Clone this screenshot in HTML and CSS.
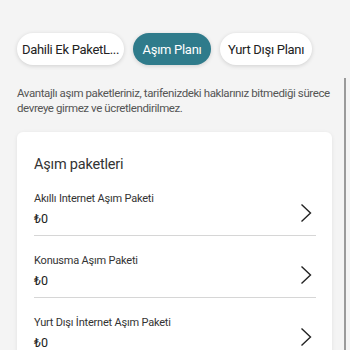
FILE: index.html
```html
<!DOCTYPE html>
<html lang="tr">
<head>
<meta charset="utf-8">
<link rel="stylesheet" href="styles.css">
</head>
<body>
<div class="page">
  <div class="tabs">
    <button class="pill pill-1">Dahili Ek PaketL...</button>
    <button class="pill pill-2 active">Aşım Planı</button>
    <button class="pill pill-3">Yurt Dışı Planı</button>
  </div>
  <p class="desc">Avantajlı aşım paketleriniz, tarifenizdeki haklarınız bitmediği sürece devreye girmez ve ücretlendirilmez.</p>
  <div class="card">
    <h2 class="card-title">Aşım paketleri</h2>
    <div class="item">
      <div class="item-text">
        <div class="item-name">Akıllı Internet Aşım Paketi</div>
        <div class="item-price">₺0</div>
      </div>
      <svg class="chev" width="12" height="20" viewBox="0 0 12 20"><path d="M1.5 1.5 L10.5 10 L1.5 18.5" fill="none" stroke="#222" stroke-width="1.4"/></svg>
    </div>
    <div class="item">
      <div class="item-text">
        <div class="item-name">Konusma Aşım Paketi</div>
        <div class="item-price">₺0</div>
      </div>
      <svg class="chev" width="12" height="20" viewBox="0 0 12 20"><path d="M1.5 1.5 L10.5 10 L1.5 18.5" fill="none" stroke="#222" stroke-width="1.4"/></svg>
    </div>
    <div class="item">
      <div class="item-text">
        <div class="item-name">Yurt Dışı İnternet Aşım Paketi</div>
        <div class="item-price">₺0</div>
      </div>
      <svg class="chev" width="12" height="20" viewBox="0 0 12 20"><path d="M1.5 1.5 L10.5 10 L1.5 18.5" fill="none" stroke="#222" stroke-width="1.4"/></svg>
    </div>
  </div>
  <div class="scrollbar"></div>
</div>
</body>
</html>
```

FILE: styles.css
```css
* { box-sizing: border-box; }
html, body {
  margin: 0;
  padding: 0;
  background: #f4f4f4;
  font-family: Roboto, "Open Sans", sans-serif;
  color: #333;
  overflow: hidden;
}
.page {
  position: relative;
  width: 350px;
  height: 350px;
  padding: 33px 18px 0 17px;
  overflow: hidden;
}
.tabs {
  display: flex;
  gap: 9px;
}
.pill {
  flex: none;
  height: 32px;
  border: none;
  border-radius: 16px;
  background: #fff;
  color: #222;
  font-family: Roboto, sans-serif;
  font-size: 13px;
  letter-spacing: -0.3px;
  padding: 0;
  box-shadow: 0 1px 4px rgba(0,0,0,0.15);
  white-space: nowrap;
}
.pill-1 { width: 107px; }
.pill-2 { width: 78px; }
.pill-3 { width: 92px; }
.pill.active {
  background: #2f7b8b;
  color: #fff;
}
.desc {
  margin: 21px 0 0;
  font-size: 11.5px;
  letter-spacing: -0.4px;
  line-height: 15px;
  color: #555;
  width: 318px;
}
.card {
  margin-top: 16px;
  width: 315px;
  background: #fff;
  border-radius: 6px;
  box-shadow: 0 1px 4px rgba(0,0,0,0.08);
  padding: 23px 16px 0 17px;
}
.card-title {
  margin: 0 0 13px;
  font-size: 14.5px;
  font-weight: normal;
  color: #333;
  line-height: 20px;
  letter-spacing: -0.2px;
}
.item {
  display: flex;
  align-items: center;
  justify-content: space-between;
  border-bottom: 1px solid #d6d6d6;
  height: 48px;
  margin-bottom: 14px;
  padding-right: 4px;
}
.item-text {
  display: flex;
  flex-direction: column;
  gap: 5px;
  padding-bottom: 4px;
}
.item-name {
  font-size: 11px;
  letter-spacing: -0.2px;
  color: #333;
  line-height: 14px;
}
.item-price {
  font-size: 12.5px;
  color: #222;
  line-height: 16px;
}
.chev { margin-top: 2px; }
.scrollbar {
  position: absolute;
  right: 4px;
  top: 78px;
  width: 2px;
  height: 272px;
  background: #9a9a9a;
}
```
